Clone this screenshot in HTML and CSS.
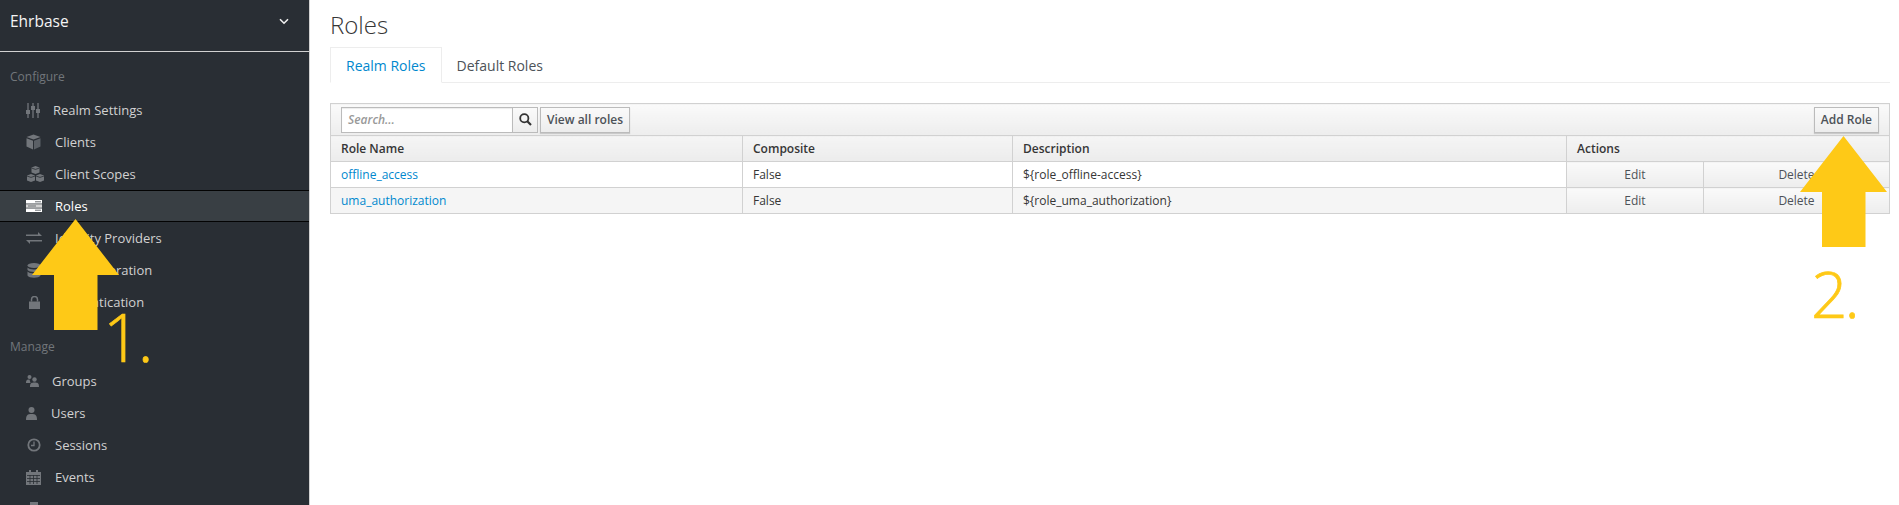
FILE: index.html
```html
<!DOCTYPE html>
<html lang="en">
<head>
<meta charset="utf-8">
<title>Roles</title>
<link rel="stylesheet" href="styles.css">
</head>
<body>
<div class="page">
  <aside class="sidebar">
    <div class="realm">
      <span>Ehrbase</span>
      <svg class="chev" viewBox="0 0 10 7" width="10" height="7"><path d="M1 1.200 5 5.200 9 1.200" fill="none" stroke="#f0f0f0" stroke-width="1.600"/></svg>
    </div>
    <h2 class="group first">Configure</h2>
    <ul class="menu">
      <li class="item"><span class="slot s27"><svg viewBox="0 0 14 15" width="14" height="15"><path d="M2 0v15M7 0v15M12 0v15" stroke="#72767b" stroke-width="1.300"/><path d="M0 7h4v4H0zM5 3h4v4H5zM10 6h4v4h-4z" fill="#72767b"/></svg></span><span>Realm Settings</span></li>
      <li class="item"><span class="slot"><svg viewBox="0 0 15 16" width="15" height="16"><path d="M7.500 .5 14.500 3 7.500 5.500 .5 3z" fill="#72767b"/><path d="M.5 4.300 7 6.700V15.500L.5 12.500z" fill="#72767b"/><path d="M8 6.700 14.500 4.300V12.500L8 15.500z" fill="#5b6066"/></svg></span><span>Clients</span></li>
      <li class="item"><span class="slot"><svg viewBox="0 0 19 16" width="19" height="16"><path d="M9.500 0 13.500 1.500V6.500L9.500 8 5.500 6.500V1.500zM5 8 9 9.500V14.500L5 16 1 14.500V9.500zM14 8 18 9.500V14.500L14 16 10 14.500V9.500z" fill="#72767b"/><path d="M5.500 2 9.500 3.400 13.500 2M1 10 5 11.400 9 10M10 10 14 11.400 18 10" fill="none" stroke="#292e34" stroke-width=".8"/></svg></span><span>Client Scopes</span></li>
      <li class="item active"><span class="slot"><svg viewBox="0 0 16 12" width="16" height="12"><path d="M0 0h16v3.500H0z" fill="#fff"/><path d="M0 4.300h16v3.400H0z" fill="#d4d4d4"/><path d="M0 8.500h16V12H0z" fill="#fff"/><path d="M9 1.800h6M2 6h8M9 10.200h6" stroke="#6a6e73" stroke-width="1"/></svg></span><span>Roles</span></li>
      <li class="item"><span class="slot"><svg viewBox="0 0 16 12" width="16" height="12"><path d="M0 2.500h12V0l4 4H0zM0 8h16v1.500H4V12L0 8z" fill="#72767b"/></svg></span><span>Identity Providers</span></li>
      <li class="item"><span class="slot"><svg class="nudge" viewBox="0 0 14 15" width="14" height="15"><ellipse cx="7" cy="2.500" rx="6.500" ry="2.500" fill="#72767b"/><path d="M.5 4.500C2 7 12 7 13.500 4.500V7C12 9.500 2 9.500 .5 7zM.5 8.500C2 11 12 11 13.500 8.500V12.500C12 15.500 2 15.500 .5 12.500z" fill="#72767b"/></svg></span><span>User Federation</span></li>
      <li class="item"><span class="slot"><svg class="lock" viewBox="0 0 11 13" width="11" height="13"><path d="M0 5.500h11V13H0z" fill="#72767b"/><path d="M2.500 5.500V3.500a3 3 0 0 1 6 0v2" fill="none" stroke="#72767b" stroke-width="1.500"/></svg></span><span>Authentication</span></li>
    </ul>
    <h2 class="group">Manage</h2>
    <ul class="menu">
      <li class="item"><span class="slot s26"><svg viewBox="0 0 13 12" width="13" height="12"><circle cx="3.500" cy="2" r="2" fill="#72767b"/><circle cx="8.500" cy="4.500" r="2.200" fill="#72767b"/><path d="M0 8c0-3 1-3.500 3.500-3.500L4.500 8zM4 12c0-4 1.500-4.500 4.500-4.500S13 8 13 12z" fill="#72767b"/></svg></span><span>Groups</span></li>
      <li class="item"><span class="slot s25"><svg viewBox="0 0 11 13" width="11" height="13"><circle cx="5.500" cy="3" r="3" fill="#72767b"/><path d="M0 13c0-5 1.500-6 5.500-6S11 8 11 13z" fill="#72767b"/></svg></span><span>Users</span></li>
      <li class="item"><span class="slot"><svg class="nudge" viewBox="0 0 14 14" width="14" height="14"><circle cx="7" cy="7" r="5.700" fill="none" stroke="#72767b" stroke-width="1.800"/><path d="M7 3.500V7.500H4" fill="none" stroke="#72767b" stroke-width="1.300"/></svg></span><span>Sessions</span></li>
      <li class="item"><span class="slot"><svg viewBox="0 0 15 15" width="15" height="15"><path d="M0 2h15v13H0z" fill="#72767b"/><path d="M3 0h2v3H3zM10 0h2v3h-2z" fill="#72767b"/><path d="M1 5.500h13M1 8.500h13M1 11.500h13M4 5v9M7.500 5v9M11 5v9" stroke="#292e34" stroke-width=".8"/></svg></span><span>Events</span></li>
      <li class="item"><span class="slot"><svg viewBox="0 0 14 14" width="14" height="14"><path d="M0 3h14v11H0z" fill="#72767b"/><path d="M4 0h8v3H4z" fill="#72767b"/></svg></span></li>
    </ul>
  </aside>

  <main class="content">
    <h1 class="title">Roles</h1>
    <nav class="tabs">
      <a class="tab current">Realm Roles</a>
      <a class="tab">Default Roles</a>
    </nav>
    <table class="grid">
      <colgroup>
        <col class="c1"><col class="c2"><col class="c3"><col class="c4"><col>
      </colgroup>
      <thead>
        <tr class="tools">
          <th colspan="5">
            <div class="toolbar">
              <div class="search">
                <span class="input">Search...</span>
                <span class="go"><svg viewBox="0 0 13 13" width="13" height="13"><circle cx="5.300" cy="5.300" r="4.100" fill="none" stroke="#333" stroke-width="1.800"/><path d="M8.300 8.300 12 12" stroke="#333" stroke-width="2.200"/></svg></span>
              </div>
              <span class="btn">View all roles</span>
              <span class="btn add">Add Role</span>
            </div>
          </th>
        </tr>
        <tr class="head">
          <th>Role Name</th><th>Composite</th><th>Description</th><th colspan="2">Actions</th>
        </tr>
      </thead>
      <tbody>
        <tr>
          <td><a class="link">offline_access</a></td><td>False</td><td>${role_offline-access}</td>
          <td class="action">Edit</td><td class="action">Delete</td>
        </tr>
        <tr class="odd">
          <td><a class="link">uma_authorization</a></td><td>False</td><td>${role_uma_authorization}</td>
          <td class="action">Edit</td><td class="action">Delete</td>
        </tr>
      </tbody>
    </table>
  </main>

  <svg class="arrow one" viewBox="0 0 87 111" width="87" height="111"><path d="M43.500 0 87 56H65.500V111H22V56H0z" fill="#fec917"/></svg>
  <span class="num n1">1.</span>
  <svg class="arrow two" viewBox="0 0 87 111" width="87" height="111"><path d="M43.500 0 87 56H65.500V111H22V56H0z" fill="#fec917"/></svg>
  <span class="num n2">2.</span>
</div>
</body>
</html>
```

FILE: styles.css
```css
* { box-sizing: border-box; }
html, body { margin: 0; padding: 0; height: 505px; overflow: hidden; background: #fff; }
body { font-family: "Open Sans", "Liberation Sans", sans-serif; font-size: 12px; color: #363636; }
.page { position: relative; display: flex; width: 1899px; height: 505px; overflow: hidden; }

.sidebar { flex: 0 0 310px; height: 505px; background: #292e34; border-right: 1px solid #d1d1d1; color: #d1d1d1; overflow: hidden; }
.realm { display: flex; justify-content: space-between; align-items: center; height: 52px; padding: 0 20px 9px 10px; border-bottom: 1px solid #d1d1d1; font-size: 15.500px; color: #f5f5f5; }
.group { margin: 0; padding: 16px 0 0 10px; height: 43px; font-size: 12px; font-weight: 400; color: #72767b; line-height: 17px; }
.group.first { height: 42px; }
.menu { list-style: none; margin: 0 0 4px; padding: 0; }
.item { display: flex; align-items: center; height: 32px; padding-left: 26px; font-size: 13px; color: #d1d1d1; white-space: nowrap; border-top: 1px solid transparent; border-bottom: 1px solid transparent; }
.item.active { background: #393f44; border-color: #030303; color: #fff; }
.slot { flex: none; display: flex; align-items: center; width: 29px; }
.s27 { width: 27px; }
.s26 { width: 26px; }
.s25 { width: 25px; }
.nudge { margin-left: 1px; }
.lock { margin-left: 3px; }

.content { flex: 1; min-width: 0; padding: 0 9px 0 20px; }
.title { margin: 0; height: 47px; padding-top: 8px; font-size: 24px; line-height: 33px; font-weight: 300; color: #363636; }
.tabs { display: flex; height: 36px; border-bottom: 1px solid #ededed; font-size: 14px; }
.tab { display: block; height: 36px; padding: 0 15px; line-height: 37px; color: #4d5258; }
.tab.current { border: 1px solid #ededed; border-bottom: 1px solid #fff; color: #0088ce; line-height: 35px; }

.grid { margin-top: 20px; width: 1560px; table-layout: fixed; border-collapse: collapse; font-size: 12px; }
.c1 { width: 412px; } .c2 { width: 270px; } .c3 { width: 554px; } .c4 { width: 137px; }
.grid th, .grid td { border: 1px solid #d1d1d1; padding: 0 10px; text-align: left; height: 26px; }
.tools th { padding: 0; height: 32px; background: linear-gradient(#fafafa, #ededed); font-weight: 400; }
.toolbar { display: flex; align-items: center; gap: 2px; padding: 0 10px; }
.search { display: flex; height: 26px; }
.input { width: 172px; height: 26px; border: 1px solid #bbb; background: #fff; font-style: italic; font-weight: 600; color: #999; padding-left: 6px; line-height: 24px; box-shadow: inset 0 1px 1px rgba(3,3,3,.08); }
.go { width: 25px; height: 26px; display: flex; align-items: center; justify-content: center; border: 1px solid #bbb; border-left: 0; background: linear-gradient(#fafafa, #ededed); }
.btn { height: 26px; padding: 0 6px; line-height: 24px; border: 1px solid #bbb; background: linear-gradient(#fafafa, #ededed); font-weight: 600; color: #4d5258; box-shadow: 0 1px 1px rgba(3,3,3,.15); }
.add { margin-left: auto; }
.head th { background: linear-gradient(#f5f5f5, #ececec); font-weight: 600; color: #363636; }
.odd td { background: #f5f5f5; }
.link { color: #0088ce; }
.grid td.action { background: linear-gradient(#fafafa, #ededed); text-align: center; padding: 0; color: #4d5258; }

.arrow { position: absolute; }
.arrow.one { left: 32px; top: 219px; }
.arrow.two { left: 1800px; top: 136px; }
.num { position: absolute; font-weight: 300; color: #fec917; -webkit-text-stroke: .7px #fec917; font-size: 64px; line-height: 64px; }
.n1 { left: 103px; top: 303px; font-size: 66px; line-height: 66px; letter-spacing: -3px; }
.n2 { left: 1811px; top: 262px; letter-spacing: -3px; }
```
